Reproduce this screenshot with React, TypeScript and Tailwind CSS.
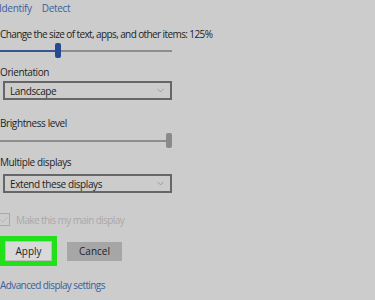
import { ChevronDown, Check } from 'lucide-react';

const font = { fontFamily: '"Open Sans", "Noto Sans", sans-serif' };

const Slider = ({ pos, active }: { pos: number; active: boolean }) => (
  <div className="relative h-[15px] w-[172px]">
    <div className="absolute left-0 right-0 top-[7px] h-[2px] bg-[#8d8d8d]" />
    {active && <div className="absolute left-0 top-[7px] h-[2px] bg-[#36568f]" style={{ width: pos }} />}
    <div
      className={`absolute top-0 h-[15px] w-[6px] rounded-[2px] ${active ? 'bg-[#254a94]' : 'bg-[#8a8a8a]'}`}
      style={{ left: pos }}
    />
  </div>
);

const Dropdown = ({ label }: { label: string }) => (
  <div className="ml-[3px] flex h-[19px] w-[169px] items-center justify-between border-2 border-[#666] pl-[5px] pr-[4px]">
    <span className="text-[10px] leading-none text-[#222] tracking-[-0.4px]">{label}</span>
    <ChevronDown size={11} strokeWidth={1.5} className="text-[#888]" />
  </div>
);

export default function App() {
  return (
    <div className="h-[300px] w-[375px] overflow-hidden bg-[#cccccc] text-[#1e1e1e]" style={font}>
      <div className="ml-[-1px] flex gap-[10px] pt-[2px] text-[10px] leading-[12px] text-[#3b5f9d] tracking-[-0.3px]">
        <span>Identify</span>
        <span>Detect</span>
      </div>

      <div className="mt-[14px] text-[10px] leading-[12px] tracking-[-0.6px]">
        Change the size of text, apps, and other items: 125%
      </div>
      <div className="mt-[3px]">
        <Slider pos={55} active />
      </div>

      <div className="mt-[8px] text-[10px] leading-[12px] tracking-[-0.4px]">Orientation</div>
      <div className="mt-[3px]">
        <Dropdown label="Landscape" />
      </div>

      <div className="mt-[17px] text-[10px] leading-[12px] tracking-[-0.4px]">Brightness level</div>
      <div className="mt-[4px]">
        <Slider pos={166} active={false} />
      </div>

      <div className="mt-[8px] text-[10px] leading-[12px] tracking-[-0.4px]">Multiple displays</div>
      <div className="mt-[6px]">
        <Dropdown label="Extend these displays" />
      </div>

      <div className="mt-[20px] flex items-center gap-[6px]">
        <div className="ml-[-2px] flex h-[13px] w-[12px] items-center justify-center border border-[#a8a8a8]">
          <Check size={10} strokeWidth={1.5} className="text-[#a8a8a8]" />
        </div>
        <span className="text-[10px] leading-[12px] text-[#a9a9a9] tracking-[-0.6px]">Make this my main display</span>
      </div>

      <div className="mt-[10px] flex items-center gap-[10px]">
        <div className="flex h-[30px] w-[57px] items-center justify-center bg-[#22e01a]">
          <div className="flex h-[20px] w-[47px] items-center justify-center border border-[#bdbdbd] bg-[#d9d9d9] text-[10px]">
            Apply
          </div>
        </div>
        <div className="flex h-[19px] w-[55px] items-center justify-center bg-[#a6a6a6] text-[10px]">Cancel</div>
      </div>

      <div className="mt-[13px] text-[10px] leading-[12px] text-[#3b5f9d] tracking-[-0.6px]">Advanced display settings</div>
    </div>
  );
}
